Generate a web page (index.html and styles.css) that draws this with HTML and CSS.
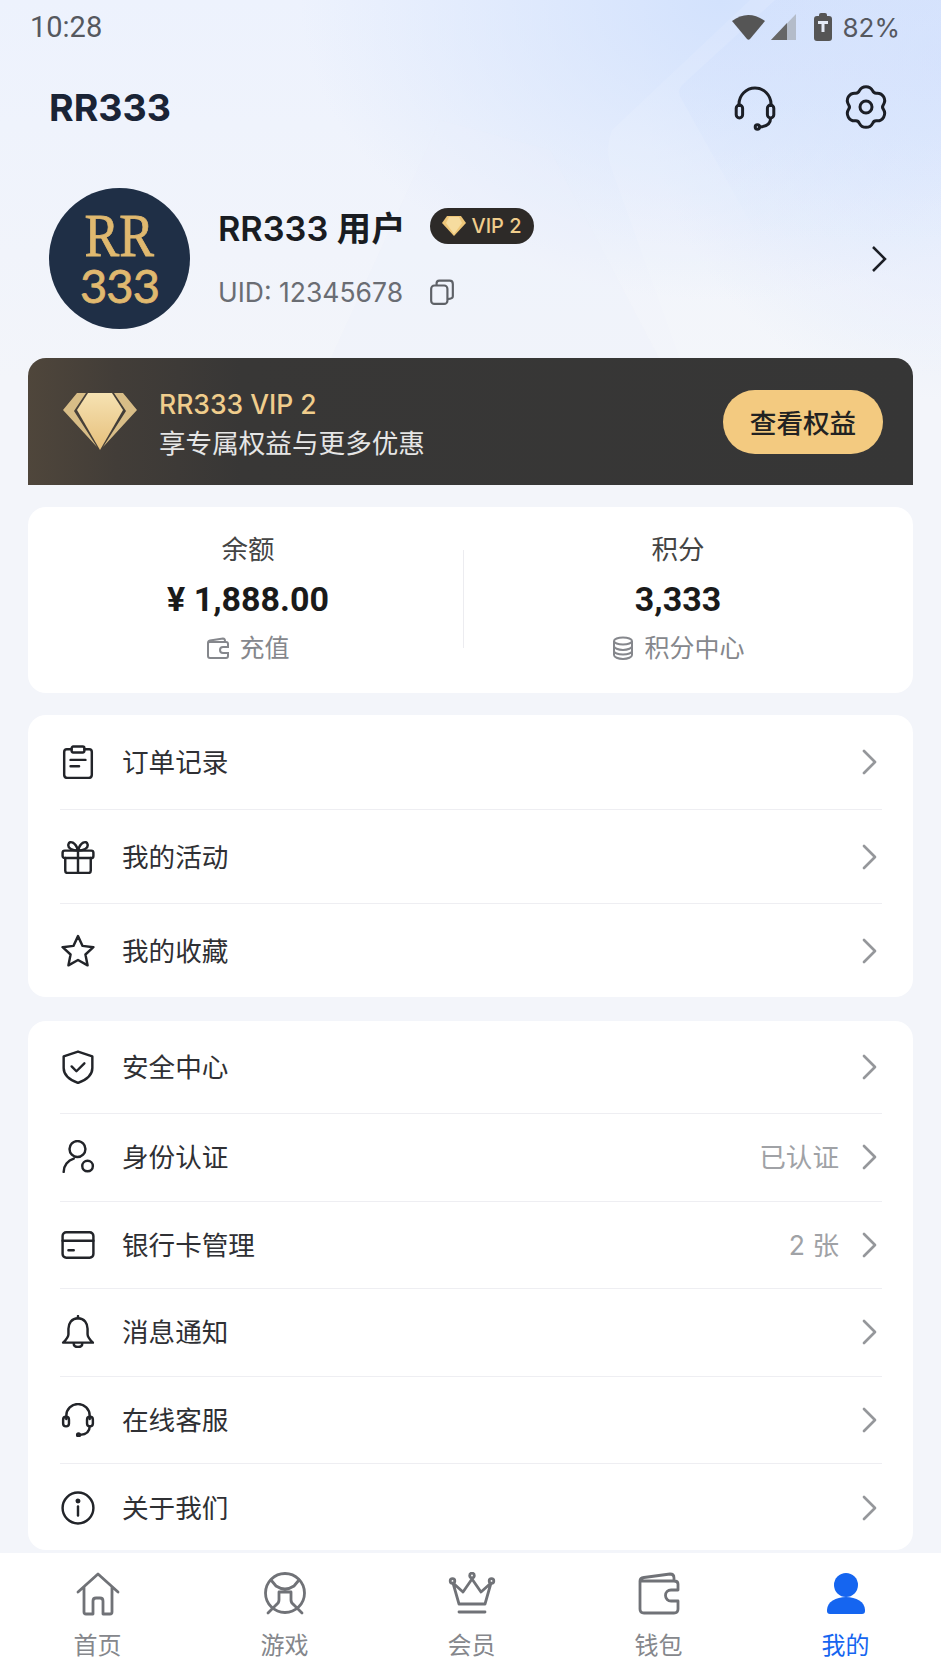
FILE: index.html

```html
<!DOCTYPE html>
<html lang="zh-CN">
<head>
    <meta charset="UTF-8">
    <meta name="viewport" content="width=device-width, initial-scale=1.0">
    <title>RR333 我的</title>
    <link rel="stylesheet" href="styles.css">
</head>
<body>
<div class="screen">
    <svg class="deco" viewBox="0 0 941 360" preserveAspectRatio="none">
        <defs>
            <linearGradient id="decoFade" x1="0" y1="0" x2="0" y2="1">
                <stop offset="0" stop-color="#c6d9fc" stop-opacity="0.28"/>
                <stop offset="1" stop-color="#c6d9fc" stop-opacity="0"/>
            </linearGradient>
        </defs>
        <path d="M750 0L612 130Q604 150 612 170L680 360H941V0Z" fill="#fff" opacity="0.1"/>
        <path d="M775 0L682 85Q676 92 682 100L760 240H941V0Z" fill="url(#decoFade)"/>
        <path d="M440 120L550 150L660 360H330Z" fill="#eaf0fd" opacity="0.25"/>
    </svg>

    <div class="statusbar">
        <span class="time">10:28</span>
        <div class="status-right">
            <svg class="st-wifi" width="33" height="26" viewBox="0 0 33 26"><path d="M0 7Q16-5 33 7L18 25Q16.500 26.500 15 25Z" fill="#555"/></svg>
            <svg class="st-signal" width="26" height="26" viewBox="0 0 26 26"><path d="M25 0V26H0Z" fill="#b4bcc9"/><path d="M16 9V26H0Z" fill="#666"/></svg>
            <svg class="st-battery" width="18" height="28" viewBox="0 0 18 28"><path d="M5 2Q5 0 7 0H11Q13 0 13 2V3H15Q18 3 18 6V25Q18 28 15 28H3Q0 28 0 25V6Q0 3 3 3H5Z" fill="#555"/><path d="M4 8H14V11H10.500V19H7.500V11H4Z" fill="#e4eaf5"/></svg>
            <span class="battery">82%</span>
        </div>
    </div>

    <header class="topbar">
        <h1 class="logo">RR333</h1>
        <div class="top-icons">
            <svg class="top-icon" viewBox="0 0 24 24"><path d="M4 12V10.500a8 8 0 0 1 16 0V12"/><rect x="2.600" y="11" width="3.200" height="6.500" rx="1.600"/><rect x="18.200" y="11" width="3.200" height="6.500" rx="1.600"/><path d="M19.800 17.500C19.800 20.500 17.500 21.800 14.500 22"/><circle cx="13.200" cy="22" r="1.100"/></svg>
            <svg class="top-icon" viewBox="0 0 24 24"><path d="M8.700 3.840A3.700 3.700 0 0 1 15.300 3.840Q15.900 5.250 17.420 5.070A3.700 3.700 0 0 1 20.710 10.780Q19.800 12 20.710 13.220A3.700 3.700 0 0 1 17.420 18.930Q15.900 18.750 15.300 20.160A3.700 3.700 0 0 1 8.700 20.160Q8.100 18.750 6.580 18.930A3.700 3.700 0 0 1 3.290 13.220Q4.200 12 3.290 10.780A3.700 3.700 0 0 1 6.580 5.070Q8.100 5.250 8.700 3.840Z"/><circle cx="12" cy="12" r="3"/></svg>
        </div>
    </header>

    <section class="profile">
        <div class="avatar">
            <span class="avatar-rr">RR</span>
            <span class="avatar-num">333</span>
        </div>
        <div class="profile-info">
            <div class="name-line">
                <span class="name">RR333 用户</span>
                <span class="vip-pill">
                    <svg width="24" height="20" viewBox="0 0 24 20"><path d="M5 0H19L24 7L12 20L0 7Z" fill="#eec678"/><path d="M7 1H17L20 7L12 18L4 7Z" fill="#f6dc9f"/></svg>
                    VIP 2
                </span>
            </div>
            <div class="uid-line">
                <span>UID: 12345678</span>
                <svg class="copy" viewBox="0 0 24 24"><rect x="2" y="6" width="15" height="17" rx="3"/><path d="M7 6V4Q7 1.500 9.500 1.500H19Q22 1.500 22 4.500V16Q22 18.500 17 18.500"/></svg>
            </div>
        </div>
        <svg class="profile-arrow" viewBox="0 0 16 28"><path d="M2 2L14 14L2 26"/></svg>
    </section>

    <section class="vip-banner">
        <svg class="gem" viewBox="0 0 74 58">
            <defs>
                <linearGradient id="gemFace" x1="0" y1="0" x2="0" y2="1">
                    <stop offset="0" stop-color="#f6e2b2"/>
                    <stop offset="1" stop-color="#e6bf7b"/>
                </linearGradient>
            </defs>
            <polygon points="0,18 14,1 23,1 11,19 34,55" fill="#d8bd87"/>
            <polygon points="74,18 60,1 51,1 63,19 40,55" fill="#d8bd87"/>
            <polygon points="25,1 49,1 60,18 37,58 14,18" fill="url(#gemFace)"/>
        </svg>
        <div class="vip-text">
            <div class="vip-title">RR333 VIP 2</div>
            <div class="vip-sub">享专属权益与更多优惠</div>
        </div>
        <button class="vip-btn" type="button">查看权益</button>
    </section>

    <section class="stats card">
        <div class="stat">
            <div class="stat-label">余额</div>
            <div class="stat-value">¥ 1,888.00</div>
            <div class="stat-link">
                <svg class="stat-icon" viewBox="0 0 24 24"><path d="M2 7V20Q2 22 4 22H20Q22 22 22 20V17H17a3 3 0 0 1 0-6H22V8Q22 6 20 6H4Q2 6 2 7Q2 5 4 4.500L17 2.500Q19 2.500 19 5"/></svg>
                充值
            </div>
        </div>
        <div class="stat stat-right">
            <div class="stat-label">积分</div>
            <div class="stat-value">3,333</div>
            <div class="stat-link">
                <svg class="stat-icon" viewBox="0 0 24 24"><ellipse cx="12" cy="5" rx="9" ry="3.500"/><path d="M3 5V19C3 21 7 23 12 23S21 21 21 19V5M3 10C3 12 7 14 12 14S21 12 21 10M3 15C3 17 7 18.500 12 18.500S21 17 21 15"/></svg>
                积分中心
            </div>
        </div>
    </section>

    <section class="menu card menu-short">
        <div class="row">
            <svg class="row-icon" viewBox="0 0 32 32"><path d="M10 4H5.500Q3 4 3 6.500V28Q3 31 6 31H26Q29 31 29 28V6.500Q29 4 26.500 4H22"/><rect x="10" y="1.500" width="12" height="5.500" rx="1.500"/><path d="M9 14H23M9 20H17"/></svg>
            <span class="row-label">订单记录</span>
            <svg class="row-arrow" viewBox="0 0 16 28"><path d="M3 3L14 14L3 25"/></svg>
        </div>
        <div class="row">
            <svg class="row-icon" viewBox="0 0 32 32"><rect x="1.500" y="10" width="29" height="7" rx="2"/><path d="M4 17V29Q4 31 6 31H26Q28 31 28 29V17M16 10V31M16 10C11 10 6 8 7 4C8 0 14 2 16 10C18 2 24 0 25 4C26 8 21 10 16 10Z"/></svg>
            <span class="row-label">我的活动</span>
            <svg class="row-arrow" viewBox="0 0 16 28"><path d="M3 3L14 14L3 25"/></svg>
        </div>
        <div class="row">
            <svg class="row-icon" viewBox="0 0 32 32"><path d="M16 2L20.300 11.200L30.500 12.400L23 19.300L25 29.500L16 24.500L7 29.500L9 19.300L1.500 12.400L11.700 11.200Z"/></svg>
            <span class="row-label">我的收藏</span>
            <svg class="row-arrow" viewBox="0 0 16 28"><path d="M3 3L14 14L3 25"/></svg>
        </div>
    </section>

    <section class="menu card menu-long">
        <div class="row row-first">
            <svg class="row-icon" viewBox="0 0 32 32"><path d="M16 1.500L29.500 6V17C29.500 24 23 28.500 16 31C9 28.500 2.500 24 2.500 17V6Z"/><path d="M10 15.500L14.500 20L22 12.500"/></svg>
            <span class="row-label">安全中心</span>
            <svg class="row-arrow" viewBox="0 0 16 28"><path d="M3 3L14 14L3 25"/></svg>
        </div>
        <div class="row">
            <svg class="row-icon" viewBox="0 0 32 32"><circle cx="15.500" cy="8.500" r="7.500"/><path d="M2.500 30C2.500 24 6.500 19 12 17.500"/><circle cx="25" cy="24.500" r="5"/></svg>
            <span class="row-label">身份认证</span>
            <span class="row-value">已认证</span>
            <svg class="row-arrow" viewBox="0 0 16 28"><path d="M3 3L14 14L3 25"/></svg>
        </div>
        <div class="row">
            <svg class="row-icon" viewBox="0 0 32 32"><rect x="1.500" y="4" width="29" height="24" rx="3.500"/><path d="M1.500 12H30.500M7 21H12"/></svg>
            <span class="row-label">银行卡管理</span>
            <span class="row-value">2 张</span>
            <svg class="row-arrow" viewBox="0 0 16 28"><path d="M3 3L14 14L3 25"/></svg>
        </div>
        <div class="row">
            <svg class="row-icon" viewBox="0 0 32 32"><path d="M16 3C10 3 7 8 7 13V18C7 21 5 23 2 26H30C27 23 25 21 25 18V13C25 8 22 3 16 3Z"/><path d="M16 1V3M12 27C12 31 20 31 20 27"/></svg>
            <span class="row-label">消息通知</span>
            <svg class="row-arrow" viewBox="0 0 16 28"><path d="M3 3L14 14L3 25"/></svg>
        </div>
        <div class="row">
            <svg class="row-icon" viewBox="0 0 32 32"><path d="M5 15V12a11 11 0 0 1 22 0V15"/><rect x="2" y="13" width="5.500" height="9" rx="2.700"/><rect x="24.500" y="13" width="5.500" height="9" rx="2.700"/><path d="M27 22C27 27 23 29.500 18 30"/><circle cx="16.500" cy="30" r="1.300"/></svg>
            <span class="row-label">在线客服</span>
            <svg class="row-arrow" viewBox="0 0 16 28"><path d="M3 3L14 14L3 25"/></svg>
        </div>
        <div class="row">
            <svg class="row-icon" viewBox="0 0 32 32"><circle cx="16" cy="16" r="14.500"/><path d="M16 14.500V23"/><circle class="dot" cx="16" cy="9.500" r="1.200"/></svg>
            <span class="row-label">关于我们</span>
            <svg class="row-arrow" viewBox="0 0 16 28"><path d="M3 3L14 14L3 25"/></svg>
        </div>
    </section>

    <nav class="tabbar">
        <div class="tab">
            <svg class="tab-icon" viewBox="0 0 44 44"><path d="M2 20L22 2L42 20M8 15V40Q8 42 10 42H17V29Q17 26 20 26H24Q27 26 27 29V42H34Q36 42 36 40V15"/></svg>
            <span>首页</span>
        </div>
        <div class="tab">
            <svg class="tab-icon" viewBox="0 0 44 44"><circle cx="22" cy="21" r="19.500"/><path d="M8 8L13 14Q22 20 31 14L36 8M16 20H28V28Q28 31 31 33L39 41M16 20V28Q16 31 13 33L5 41"/></svg>
            <span>游戏</span>
        </div>
        <div class="tab">
            <svg class="tab-icon tab-crown" viewBox="0 0 46 44"><path d="M4 11L10 32H36L42 11L32 20L23 7L14 20Z"/><circle cx="3.500" cy="9" r="2.300"/><circle cx="23" cy="3.500" r="2.300"/><circle cx="42.500" cy="9" r="2.300"/><path d="M10 40H36"/></svg>
            <span>会员</span>
        </div>
        <div class="tab">
            <svg class="tab-icon" viewBox="0 0 44 44"><path d="M3 9V37Q3 41 7 41H37Q41 41 41 37V29H34a5.500 5.500 0 0 1 0-11H41V12Q41 9 37 9H6Q3 9 3 9Q3 6 7 5.500L33 2Q37 2 37 6V9"/></svg>
            <span>钱包</span>
        </div>
        <div class="tab tab-active">
            <svg class="tab-icon" viewBox="0 0 44 44"><circle cx="22" cy="13" r="12"/><path d="M3 38C3 30 12 25 22 25S41 30 41 38V39Q41 42 38 42H6Q3 42 3 39Z"/></svg>
            <span>我的</span>
        </div>
    </nav>
</div>
</body>
</html>
```

FILE: styles.css

```css
* {
    box-sizing: border-box;
}
body {
    margin: 0;
    padding: 0;
    font-family: Inter, "Noto Sans CJK SC", sans-serif;
    background-color: #f3f5fa;
}
svg {
    display: block;
    flex-shrink: 0;
}
.screen {
    position: relative;
    display: flex;
    flex-direction: column;
    height: 1672px;
    overflow: hidden;
    background:
        radial-gradient(ellipse 420px 300px at 720px 0, #d3e2fd 0, rgba(211, 226, 253, 0) 100%),
        radial-gradient(ellipse 300px 340px at 941px 60px, #d9e5fd 0, rgba(217, 229, 253, 0) 100%),
        linear-gradient(180deg, #edf2fd 0, #f3f5fa 380px);
}
.screen > * {
    position: relative;
}
.screen > .deco {
    position: absolute;
    top: 0;
    left: 0;
    width: 941px;
    height: 360px;
}
.statusbar {
    display: flex;
    justify-content: space-between;
    align-items: center;
    height: 54px;
    padding: 0 41px 0 30px;
    color: #55585f;
    font-size: 26px;
}
.time {
    font-family: Roboto, sans-serif;
    font-size: 29px;
}
.status-right {
    display: flex;
    align-items: center;
}
.st-signal {
    margin-left: 6px;
}
.st-battery {
    margin-left: 17px;
}
.status-right .battery {
    margin-left: 11px;
}
.topbar {
    display: flex;
    justify-content: space-between;
    align-items: center;
    height: 106px;
    padding: 0 51px 0 49px;
}
.logo {
    margin: 0;
    font-size: 37.500px;
    font-weight: 700;
    color: #1a2436;
}
.top-icons {
    display: flex;
    gap: 63px;
}
.top-icon {
    width: 48px;
    height: 48px;
    fill: none;
    stroke: #1c1f26;
    stroke-width: 1.500;
}
.profile {
    display: flex;
    align-items: center;
    height: 141px;
    margin-top: 28px;
    padding: 0 54px 0 49px;
}
.avatar {
    display: flex;
    flex-direction: column;
    align-items: center;
    width: 141px;
    height: 141px;
    padding-top: 19px;
    border-radius: 50%;
    background: #1f2f46;
    color: #e0b96f;
}
.avatar-rr {
    font-family: "Liberation Serif", serif;
    font-size: 62px;
    line-height: 56px;
    transform: scaleX(0.84);
    -webkit-text-stroke: 0.8px #e0b96f;
}
.avatar-num {
    font-family: Lato, sans-serif;
    font-size: 47px;
    line-height: 44px;
    letter-spacing: -1px;
    -webkit-text-stroke: 0.8px #e0b96f;
}
.profile-info {
    flex: 1;
    margin-left: 28px;
}
.name-line {
    display: flex;
    align-items: center;
    gap: 25px;
    margin-top: -8px;
}
.name {
    font-size: 34.300px;
    font-weight: 600;
    color: #191c22;
}
.vip-pill {
    display: flex;
    align-items: center;
    gap: 5px;
    height: 36px;
    padding: 0 12px;
    border-radius: 18px;
    background: #2d2a28;
    color: #f0cd8c;
    font-size: 20px;
    font-weight: 500;
}
.uid-line {
    display: flex;
    align-items: center;
    gap: 26px;
    margin-top: 25px;
    color: #6a6d73;
    font-size: 26.500px;
}
.copy {
    width: 26px;
    height: 28px;
    fill: none;
    stroke: #5e6167;
    stroke-width: 2;
}
.profile-arrow {
    width: 16px;
    height: 28px;
    fill: none;
    stroke: #1c1f26;
    stroke-width: 2.500;
}
.vip-banner {
    display: flex;
    align-items: center;
    height: 127px;
    margin: 29px 28px 0;
    padding: 0 30px 0 35px;
    border-radius: 18px 18px 0 0;
    background: linear-gradient(90deg, #4f463b 0, #423d38 10%, #383736 24%, #363636 100%);
}
.gem {
    width: 74px;
    height: 58px;
    margin-top: -1px;
}
.vip-text {
    flex: 1;
    margin-left: 22px;
}
.vip-title {
    margin-top: 4px;
    font-size: 26.500px;
    font-weight: 500;
    line-height: 36px;
    color: #f0cd8c;
}
.vip-sub {
    margin-top: 2px;
    font-size: 26.600px;
    line-height: 38px;
    color: #e6e6e6;
}
.vip-btn {
    width: 160px;
    height: 64px;
    padding: 0;
    border: none;
    border-radius: 32px;
    background: #f3ca80;
    color: #222;
    font-family: inherit;
    font-size: 26.600px;
    font-weight: 500;
    cursor: pointer;
}
.card {
    margin-left: 28px;
    margin-right: 28px;
    border-radius: 18px;
    background: #fff;
}
.stats {
    display: grid;
    grid-template-columns: 430px 430px;
    height: 186px;
    margin-top: 22px;
    padding-left: 5px;
}
.stat {
    display: flex;
    flex-direction: column;
    align-items: center;
    padding-top: 24px;
}
.stat-right {
    position: relative;
}
.stat-right::before {
    content: "";
    position: absolute;
    left: 0;
    top: 43px;
    height: 98px;
    border-left: 1px solid #ececf0;
}
.stat-label {
    font-size: 26.500px;
    line-height: 36px;
    color: #444;
}
.stat-value {
    margin-top: 11px;
    font-family: Roboto, "Noto Sans CJK SC", sans-serif;
    font-size: 34px;
    font-weight: 700;
    line-height: 42px;
    color: #1a1a1a;
}
.stat-link {
    display: flex;
    align-items: center;
    gap: 9px;
    margin-top: 10px;
    font-size: 25px;
    line-height: 36px;
    color: #85878c;
}
.stat-icon {
    width: 24px;
    height: 24px;
    fill: none;
    stroke: #85878c;
    stroke-width: 2;
}
.menu {
    padding: 0 31px 0 32px;
}
.menu-short {
    margin-top: 22px;
}
.menu-short .row {
    height: 94px;
}
.menu-short .row:first-child {
    height: 95px;
}
.menu-short .row:last-child {
    height: 93px;
}
.menu-long {
    height: 529px;
    margin-top: 24px;
}
.menu-long .row {
    height: 87.500px;
}
.menu-long .row-first {
    height: 93px;
}
.row {
    display: flex;
    align-items: center;
    border-bottom: 1px solid #eeeef2;
}
.row:last-child {
    border-bottom: none;
}
.row-icon {
    width: 34px;
    height: 34px;
    margin-left: 1px;
    fill: none;
    stroke: #222429;
    stroke-width: 2.300;
    stroke-linecap: round;
    stroke-linejoin: round;
}
.row-icon .dot {
    fill: #222429;
}
.row-label {
    flex: 1;
    margin-left: 27px;
    margin-bottom: 3px;
    font-size: 26.600px;
    color: #2f3034;
}
.row-value {
    margin-bottom: 3px;
    font-size: 26.600px;
    color: #a0a2a6;
}
.row-arrow {
    width: 16px;
    height: 28px;
    margin-left: 22px;
    margin-right: 5px;
    fill: none;
    stroke: #95979b;
    stroke-width: 2.700;
    stroke-linecap: round;
    stroke-linejoin: round;
}
.tabbar {
    position: absolute !important;
    left: 0;
    right: 0;
    bottom: 0;
    display: grid;
    grid-template-columns: repeat(5, 1fr);
    height: 119px;
    padding: 0 2px 0 4px;
    background: #fff;
}
.tab {
    display: flex;
    flex-direction: column;
    align-items: center;
    padding-top: 19px;
    font-size: 24px;
    line-height: 36px;
    color: #85878c;
}
.tab span {
    margin-top: 12px;
}
.tab-icon {
    width: 44px;
    height: 44px;
    fill: none;
    stroke: #707277;
    stroke-width: 2.800;
    stroke-linecap: round;
    stroke-linejoin: round;
}
.tab-crown {
    width: 48px;
}
.tab-active {
    color: #1565f0;
}
.tab-active .tab-icon {
    fill: #1565f0;
    stroke: none;
}
```
